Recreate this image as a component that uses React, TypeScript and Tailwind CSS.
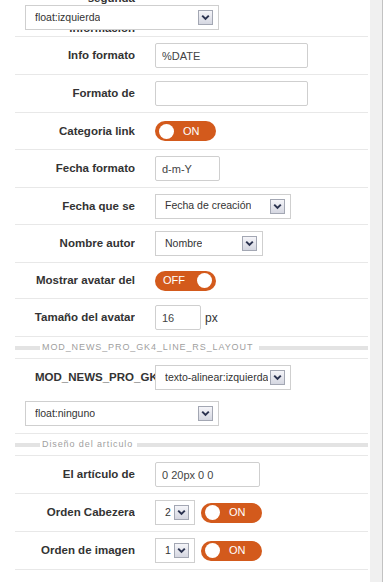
import type { ReactNode } from 'react';

function Chevron() {
  return (
    <svg width="9" height="7" viewBox="0 0 9 7" fill="none">
      <path d="M1.2 1.6 L4.5 4.9 L7.8 1.6" stroke="#2b3350" strokeWidth="2" />
    </svg>
  );
}

function Select({ text, width }: { text: string; width: string }) {
  return (
    <div className={`flex h-[25px] items-center border border-[#cfcfcf] bg-white pl-[9px] text-[10.5px] text-[#333] ${width}`}>
      <span className="overflow-hidden whitespace-nowrap">{text}</span>
      <span className="ml-auto mr-[5px] flex h-[15px] w-[15px] shrink-0 items-center justify-center border border-[#a3a7b3] bg-gradient-to-b from-[#f5f5f9] to-[#d5d7e1]">
        <Chevron />
      </span>
    </div>
  );
}

function Field({ value, width }: { value: string; width: string }) {
  return (
    <input
      readOnly
      defaultValue={value}
      className={`h-[25px] rounded-[2px] border border-[#cfcfcf] bg-white pl-[6px] text-[11px] text-[#444] outline-none ${width}`}
    />
  );
}

function Toggle({ on }: { on: boolean }) {
  if (on) {
    return (
      <div className="flex h-[20px] w-[61px] items-center rounded-full bg-[#d35a1c] pl-[4px]">
        <span className="h-[15px] w-[15px] rounded-full bg-white" />
        <span className="ml-[9px] text-[11px] text-white">ON</span>
      </div>
    );
  }
  return (
    <div className="flex h-[20px] w-[61px] items-center rounded-full bg-[#d35a1c] pl-[8px] pr-[4px]">
      <span className="text-[11px] text-white">OFF</span>
      <span className="ml-auto h-[15px] w-[15px] rounded-full bg-white" />
    </div>
  );
}

function Row({ label, height, children }: { label: string; height: string; children: ReactNode }) {
  return (
    <div className={`flex items-center border-b border-[#e8e8e8] ${height}`}>
      <div className="ml-[18px] h-[15px] w-[102px] shrink-0 overflow-hidden text-right text-[11.5px] font-bold leading-[15px] text-[#333]">
        {label}
      </div>
      <div className="ml-[20px] flex items-center">{children}</div>
    </div>
  );
}

function Legend({ text, pr }: { text: string; pr: string }) {
  return (
    <div className="flex h-[22px] items-center border-b border-[#e8e8e8]">
      <div className="h-[4px] w-[25px] bg-[#e3e3e3]" />
      <span className={`pl-[2px] text-[9px] tracking-[0.9px] text-[#a0a0a0] ${pr}`}>{text}</span>
      <div className="h-[4px] flex-1 bg-[#e3e3e3]" />
    </div>
  );
}

export default function App() {
  return (
    <div className="flex h-[582px] w-[392px] overflow-hidden bg-white font-['Liberation_Sans',Arial,sans-serif]">
      <div className="w-[370px] shrink-0 pl-[15px] pr-[2px]">
        {/* row cut off at the top: its label runs under the wrapped select */}
        <div className="border-b border-[#e8e8e8] pb-[6px]">
          <div className="-mt-[17px] ml-[18px] w-[102px] text-right text-[11.5px] font-bold leading-[30px] text-[#333]">
            segunda
            <br />
            información
          </div>
          <div className="relative -mt-[38px] ml-[10px]">
            <Select text="float:izquierda" width="w-[194px]" />
          </div>
        </div>

        <Row label="Info formato" height="h-[38px]">
          <Field value="%DATE" width="w-[153px]" />
        </Row>
        <Row label="Formato de información" height="h-[38px]">
          <Field value="" width="w-[153px]" />
        </Row>
        <Row label="Categoria link" height="h-[37px]">
          <Toggle on />
        </Row>
        <Row label="Fecha formato" height="h-[38px]">
          <Field value="d-m-Y" width="w-[65px]" />
        </Row>
        <Row label="Fecha que se muestra" height="h-[37px]">
          <Select text="Fecha de creación" width="w-[136px]" />
        </Row>
        <Row label="Nombre autor" height="h-[38px]">
          <Select text="Nombre" width="w-[108px]" />
        </Row>
        <Row label="Mostrar avatar del autor" height="h-[36px]">
          <Toggle on={false} />
        </Row>
        <Row label="Tamaño del avatar" height="h-[38px]">
          <Field value="16" width="w-[46px]" />
          <span className="ml-[4px] text-[12px] text-[#333]">px</span>
        </Row>

        <Legend text="MOD_NEWS_PRO_GK4_LINE_RS_LAYOUT" pr="pr-[6px]" />

        <div className="border-b border-[#e8e8e8] pb-[7px] pt-[6px]">
          <div className="flex items-center">
            <div className="ml-[20px] w-[100px] shrink-0 whitespace-nowrap text-right text-[11.5px] font-bold text-[#333]">
              MOD_NEWS_PRO_GK4_LINE
            </div>
            <div className="relative ml-[20px]">
              <Select text="texto-alinear:izquierda" width="w-[136px]" />
            </div>
          </div>
          <div className="ml-[10px] mt-[11px]">
            <Select text="float:ninguno" width="w-[194px]" />
          </div>
        </div>

        <Legend text="Diseño del articulo" pr="pr-[4px]" />

        <Row label="El artículo de relleno" height="h-[38px]">
          <Field value="0 20px 0 0" width="w-[105px]" />
        </Row>
        <Row label="Orden Cabezera" height="h-[38px]">
          <Select text="2" width="w-[40px]" />
          <div className="ml-[6px]">
            <Toggle on />
          </div>
        </Row>
        <Row label="Orden de imagen" height="h-[38px]">
          <Select text="1" width="w-[40px]" />
          <div className="ml-[6px]">
            <Toggle on />
          </div>
        </Row>
      </div>
      <div className="w-[13px] shrink-0 border-r border-[#c2c2c2] bg-[#f0f0f0]" />
      <div className="flex-1 bg-white" />
    </div>
  );
}
